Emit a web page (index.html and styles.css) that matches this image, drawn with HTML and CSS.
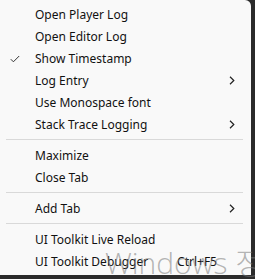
FILE: index.html
```html
<!DOCTYPE html>
<html>
<head>
<meta charset="utf-8">
<link rel="stylesheet" href="styles.css">
</head>
<body>
<div class="menu">
  <div class="item"><span class="label">Open Player Log</span></div>
  <div class="item"><span class="label">Open Editor Log</span></div>
  <div class="item"><span class="check"><svg width="10" height="8" viewBox="0 0 10 8"><path d="M0.8 4.2 L3.4 6.8 L9.2 1" fill="none" stroke="#333" stroke-width="1"/></svg></span><span class="label">Show Timestamp</span></div>
  <div class="item"><span class="label">Log Entry</span><span class="arrow"><svg width="6" height="9" viewBox="0 0 6 9"><path d="M1 0.8 L4.8 4.5 L1 8.2" fill="none" stroke="#222" stroke-width="1.2"/></svg></span></div>
  <div class="item"><span class="label">Use Monospace font</span></div>
  <div class="item"><span class="label">Stack Trace Logging</span><span class="arrow"><svg width="6" height="9" viewBox="0 0 6 9"><path d="M1 0.8 L4.8 4.5 L1 8.2" fill="none" stroke="#222" stroke-width="1.2"/></svg></span></div>
  <div class="sep"></div>
  <div class="item"><span class="label">Maximize</span></div>
  <div class="item"><span class="label">Close Tab</span></div>
  <div class="sep"></div>
  <div class="item"><span class="label">Add Tab</span><span class="arrow"><svg width="6" height="9" viewBox="0 0 6 9"><path d="M1 0.8 L4.8 4.5 L1 8.2" fill="none" stroke="#222" stroke-width="1.2"/></svg></span></div>
  <div class="sep"></div>
  <div class="item"><span class="label">UI Toolkit Live Reload</span></div>
  <div class="item"><span class="label">UI Toolkit Debugger</span><span class="shortcut">Ctrl+F5</span></div>
</div>
<div class="watermark">Windows 정품 인증</div>
</body>
</html>
```
FILE: styles.css
```css
html, body {
  margin: 0;
  padding: 0;
  width: 255px;
  height: 279px;
  overflow: hidden;
  background: #2b2b2b;
}
body {
  position: relative;
  font-family: "Noto Sans", "Noto Sans CJK KR", sans-serif;
}
.menu {
  width: 251px;
  height: 275px;
  box-sizing: border-box;
  background: #f9f9f9;
  border-top-right-radius: 6px;
  padding-top: 3px;
  display: flex;
  flex-direction: column;
}
.item {
  height: 22px;
  display: flex;
  align-items: center;
  position: relative;
  font-size: 12px;
  color: #111;
  padding-left: 35px;
}
.label {
  flex: 1;
  white-space: nowrap;
}
.check {
  position: absolute;
  left: 10px;
  top: 8px;
  width: 10px;
  height: 8px;
  display: flex;
}
.arrow {
  width: 6px;
  height: 9px;
  margin-right: 16px;
  display: flex;
}
.shortcut {
  margin-right: 34px;
  white-space: nowrap;
}
.sep {
  height: 1px;
  background: #d9d9d9;
  margin: 4px 8px 4px 6px;
}
.watermark {
  position: absolute;
  left: 105px;
  top: 243px;
  line-height: 40px;
  font-family: "Open Sans", "Noto Sans CJK KR", sans-serif;
  font-weight: 300;
  font-size: 30px;
  color: rgba(120, 120, 120, 0.55);
  white-space: nowrap;
  pointer-events: none;
}
```
